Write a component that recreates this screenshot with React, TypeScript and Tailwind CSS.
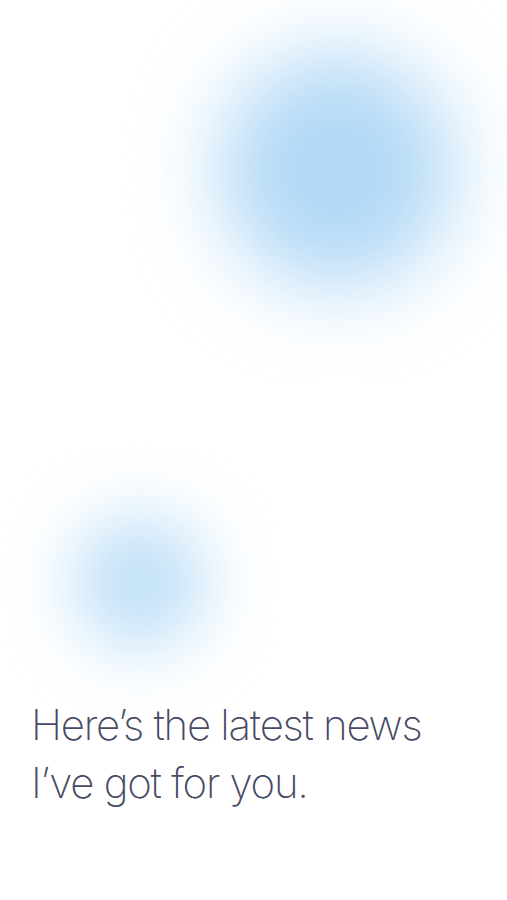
export default function App() {
  return (
    <div className="relative flex h-[900px] w-full flex-col justify-end overflow-hidden bg-white pb-[88px] pl-[31px]">
      {/* soft background glows */}
      <div className="pointer-events-none absolute left-[219px] top-[53px] h-[235px] w-[235px] rounded-full bg-[#b1d8f6] blur-[42px]" />
      <div className="pointer-events-none absolute left-[72px] top-[515px] h-[135px] w-[135px] rounded-full bg-[#c0e0f8] blur-[34px]" />

      <h1 className="relative font-['Inter',sans-serif] text-[42px] font-extralight leading-[58px] tracking-[-0.03em] text-[#474a63]">
        Here’s the latest news
        <br />
        I’ve got for you.
      </h1>
    </div>
  );
}
